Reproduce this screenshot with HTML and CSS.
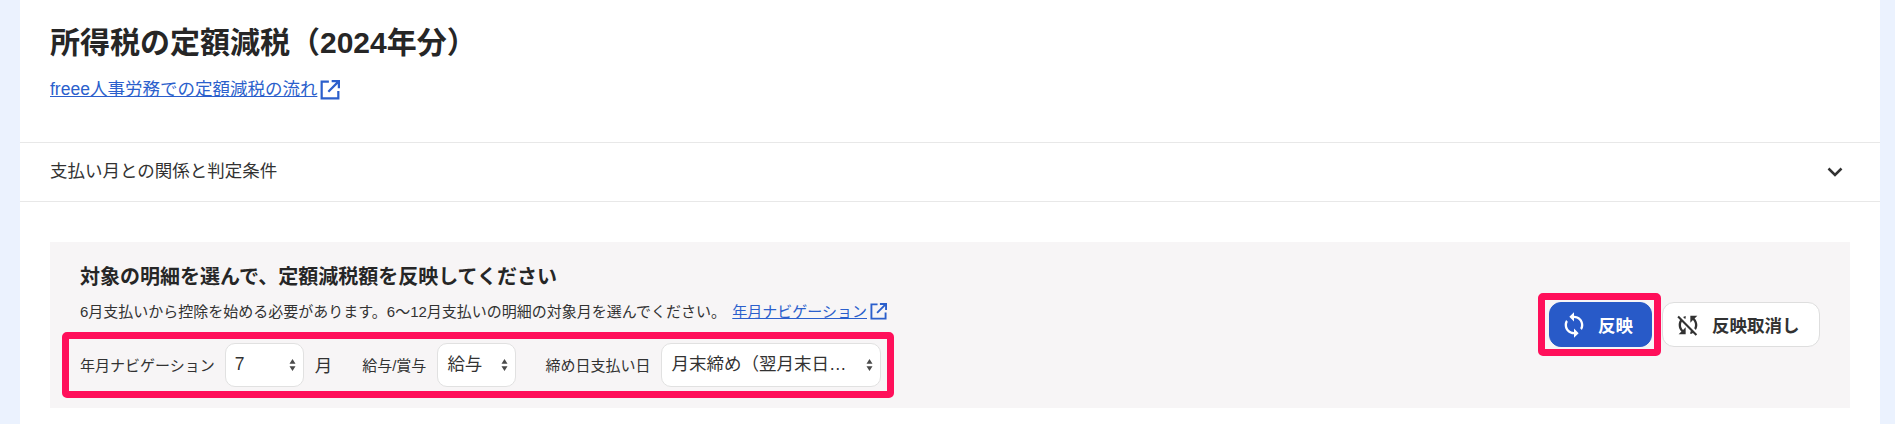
FILE: index.html
```html
<!DOCTYPE html>
<html lang="ja">
<head>
    <meta charset="UTF-8">
    <title>所得税の定額減税（2024年分）</title>
    <link rel="stylesheet" href="styles.css">
</head>
<body>
    <div class="sheet">
        <!-- Header -->
        <div class="header">
            <h1>所得税の定額減税（2024年分）</h1>
            <a href="#" class="link link-lg">freee人事労務での定額減税の流れ<svg class="ext-icon ext-lg" viewBox="1 1 18 18"><path d="M9 2.500H2.500v15h15V11M11.500 2h6.500v6.500M18 2L8.500 11.500"/></svg></a>
        </div>

        <!-- Accordion -->
        <div class="accordion">
            <span>支払い月との関係と判定条件</span>
            <svg class="chevron" viewBox="0 0 16 10"><path d="M1.500 1.500L8 8l6.500-6.500"/></svg>
        </div>

        <div class="content">
            <div class="panel">
                <div class="panel-main">
                    <h2>対象の明細を選んで、定額減税額を反映してください</h2>
                    <p class="note">6月支払いから控除を始める必要があります。6～12月支払いの明細の対象月を選んでください。 <a href="#" class="link note-link">年月ナビゲーション<svg class="ext-icon" viewBox="1 1 18 18"><path d="M9 2.500H2.500v15h15V11M11.500 2h6.500v6.500M18 2L8.500 11.500"/></svg></a></p>
                    <div class="filters mark">
                        <label class="label">年月ナビゲーション</label>
                        <div class="select-wrap month">
                            <select><option>7</option></select>
                            <svg class="arrows" viewBox="0 0 8 14"><path d="M4 0l3.500 5.500h-7zM4 14L.5 8.500h7z"/></svg>
                        </div>
                        <span class="unit">月</span>
                        <label class="label kind-label">給与/賞与</label>
                        <div class="select-wrap kind">
                            <select><option>給与</option></select>
                            <svg class="arrows" viewBox="0 0 8 14"><path d="M4 0l3.500 5.500h-7zM4 14L.5 8.500h7z"/></svg>
                        </div>
                        <label class="label closing-label">締め日支払い日</label>
                        <div class="select-wrap closing">
                            <select><option>月末締め（翌月末日払い）</option></select>
                            <svg class="arrows" viewBox="0 0 8 14"><path d="M4 0l3.500 5.500h-7zM4 14L.5 8.500h7z"/></svg>
                        </div>
                    </div>
                </div>
                <div class="actions">
                    <div class="mark mark-btn">
                        <button class="btn btn-primary"><svg viewBox="0 0 24 24"><path d="M12 4V1L8 5l4 4V6c3.310 0 6 2.690 6 6 0 1.010-.25 1.970-.7 2.800l1.460 1.460C19.540 15.030 20 13.570 20 12c0-4.420-3.580-8-8-8zm0 14c-3.310 0-6-2.690-6-6 0-1.010.25-1.970.7-2.800L5.240 7.740C4.460 8.970 4 10.430 4 12c0 4.420 3.580 8 8 8v3l4-4-4-4v3z"/></svg>反映</button>
                    </div>
                    <button class="btn btn-cancel"><svg viewBox="0 0 24 24"><path d="M10 6.350V4.260c-.8.210-1.550.54-2.230.96l1.460 1.460c.25-.12.5-.24.77-.33zm-7.140-.94l2.360 2.360C4.450 8.990 4 10.440 4 12c0 2.210.91 4.200 2.360 5.640L4 20h6v-6l-2.240 2.240C6.680 15.150 6 13.660 6 12c0-1 .25-1.940.68-2.770l8.080 8.080c-.25.13-.5.25-.77.34v2.090c.8-.21 1.550-.54 2.230-.96l2.360 2.360 1.270-1.270L4.140 4.140 2.860 5.410zM20 4h-6v6l2.240-2.240C17.320 8.850 18 10.340 18 12c0 1-.25 1.940-.68 2.770l1.460 1.460C19.550 15.010 20 13.560 20 12c0-2.210-.91-4.200-2.360-5.640L20 4z"/></svg>反映取消し</button>
                </div>
            </div>
        </div>
    </div>
</body>
</html>
```

FILE: styles.css
```css
html, body {
    height: 424px;
    overflow: hidden;
}
body {
    margin: 0;
    background-color: #ebf2fe;
    color: #323232;
    font-family: 'Liberation Sans', 'Noto Sans CJK JP', sans-serif;
}
.sheet {
    margin: 0 15px 0 20px;
    height: 424px;
    background: white;
}
.header {
    box-sizing: border-box;
    height: 143px;
    padding: 23px 30px 0;
    border-bottom: 1px solid #e8e8e8;
}
h1 {
    margin: 0;
    color: #262626;
    font-size: 30px;
    line-height: 40px;
    font-weight: 700;
}
.link {
    color: #2b5fcc;
    text-decoration: underline;
}
.link-lg {
    display: inline-block;
    margin-top: 14px;
    font-size: 17.500px;
    line-height: 24px;
}
.note-link {
    margin-left: 2px;
}
.ext-icon {
    width: 17px;
    height: 17px;
    margin-left: 3px;
    vertical-align: -3px;
    fill: none;
    stroke: #2b5fcc;
    stroke-width: 2;
}
.ext-lg {
    width: 20px;
    height: 20px;
    vertical-align: -5px;
}
.accordion {
    box-sizing: border-box;
    height: 59px;
    padding: 0 37px 6px 30px;
    border-bottom: 1px solid #e8e8e8;
    display: flex;
    align-items: center;
    justify-content: space-between;
    font-size: 17.500px;
}
.chevron {
    margin-top: 6px;
    width: 16px;
    height: 10px;
    fill: none;
    stroke: #323232;
    stroke-width: 2.500;
}
.content {
    padding: 40px 30px 0;
}
.panel {
    box-sizing: border-box;
    height: 166px;
    padding: 0 30px 0 12px;
    background-color: #f7f5f6;
    display: flex;
    align-items: center;
    justify-content: space-between;
}
.panel-main {
    align-self: flex-start;
    padding-top: 21px;
}
h2 {
    margin: 0 0 0 18px;
    color: #262626;
    font-size: 20px;
    line-height: 28px;
    font-weight: 700;
}
.note {
    margin: 10px 0 0 18px;
    font-size: 15px;
    line-height: 22px;
}
.filters {
    margin-top: 9px;
    width: 832px;
    height: 66px;
    padding: 0 5px 0 11px;
    display: flex;
    align-items: center;
}
.mark {
    box-sizing: border-box;
    border: 7px solid #ff0f5a;
    border-radius: 5px;
}
.label {
    padding-bottom: 2px;
    font-size: 15px;
    white-space: nowrap;
}
.unit {
    margin-left: 11px;
    padding-bottom: 2px;
    font-size: 17.500px;
}
.kind-label {
    margin-left: 30px;
}
.closing-label {
    margin-left: 29px;
}
.select-wrap {
    position: relative;
    flex: none;
    height: 44px;
    margin-left: 11px;
}
.month {
    width: 79px;
    margin-left: 10px;
}
.kind {
    width: 79px;
}
.closing {
    width: 220px;
}
select {
    appearance: none;
    box-sizing: border-box;
    width: 100%;
    height: 100%;
    padding: 0 28px 2px 9px;
    border: 1px solid #e1e1e1;
    border-radius: 10px;
    background: white;
    color: #323232;
    font-family: inherit;
    font-size: 17.500px;
    text-overflow: ellipsis;
    white-space: nowrap;
    overflow: hidden;
}
.arrows {
    position: absolute;
    right: 8px;
    top: 16px;
    width: 7px;
    height: 12px;
    fill: #4a4a4a;
    pointer-events: none;
}
.actions {
    display: flex;
    align-items: center;
    margin-bottom: 1px;
}
.mark-btn {
    padding: 2px 2px 2px 4px;
    margin-right: 1px;
}
.btn {
    box-sizing: border-box;
    height: 45px;
    border: 1px solid #dedede;
    border-radius: 12px;
    background: white;
    color: #323232;
    font-family: inherit;
    font-size: 17.500px;
    font-weight: 700;
    display: flex;
    align-items: center;
    gap: 10px;
    cursor: pointer;
}
.btn svg {
    width: 28px;
    height: 28px;
    fill: currentColor;
}
.btn-cancel {
    width: 158px;
    padding: 0 0 0 11px;
}
.btn-primary {
    width: 103px;
    padding: 0 0 0 10px;
    border-color: #285ac8;
    background-color: #285ac8;
    color: white;
}
```
